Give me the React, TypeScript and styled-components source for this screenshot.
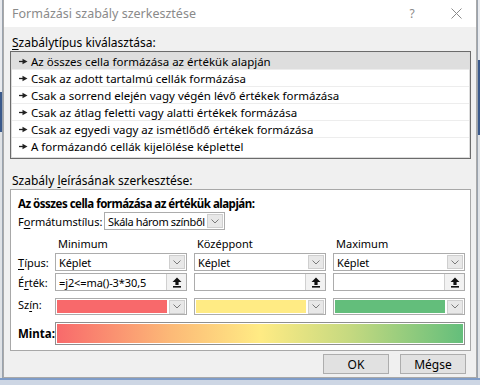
import React from 'react';
import styled, { createGlobalStyle } from 'styled-components';

const GlobalStyle = createGlobalStyle`
  html, body {
    margin: 0;
    padding: 0;
    width: 480px;
    height: 385px;
    overflow: hidden;
    background: #f4f5f7;
  }
  body {
    font-family: "Noto Sans", "Open Sans", Arial, sans-serif;
    font-size: 12px;
    color: #000;
  }
`;

const Page = styled.div`
  display: grid;
  grid-template-columns: 3px 474px 1fr;
  grid-template-rows: 378px 1fr;
  width: 480px;
  height: 385px;
`;

const SheetEdge = styled.div<{ $side: 'left' | 'right' }>`
  background:
    linear-gradient(
      to bottom,
      #e8eaee 0,
      #e8eaee ${(p) => (p.$side === 'left' ? '92px' : '60px')},
      #3b5a8c ${(p) => (p.$side === 'left' ? '92px' : '60px')},
      #3b5a8c ${(p) => (p.$side === 'left' ? '132px' : '135px')},
      #dfe2e6 ${(p) => (p.$side === 'left' ? '132px' : '135px')}
    );
  border-right: ${(p) => (p.$side === 'left' ? '1px solid #9aa3ae' : 'none')};
  border-left: ${(p) => (p.$side === 'right' ? '1px solid #9aa3ae' : 'none')};
`;

const SheetBottom = styled.div`
  grid-column: 1 / 4;
  background: #cdd6e4;
  border-top: 2px solid #7f9cc7;
`;

const Dialog = styled.div`
  display: flex;
  flex-direction: column;
  background: #f0f0f0;
  border: 1px solid #a9a9a9;
  border-top: none;
`;

const TitleBar = styled.div`
  height: 27px;
  display: flex;
  align-items: center;
  padding-left: 8px;
  background: #fff;
`;

const Title = styled.div`
  flex: 1;
  color: #8a8a8a;
  font-size: 12.5px;
`;

const TitleButton = styled.div<{ $w: number }>`
  width: ${(p) => p.$w}px;
  display: flex;
  justify-content: center;
  align-items: center;
  color: #8a8a8a;
  font-size: 12px;
`;

const Body = styled.div`
  display: flex;
  flex-direction: column;
  padding: 8px 5px 0 6px;
`;

const SectionLabel = styled.div<{ $mt?: number }>`
  height: 16px;
  line-height: 16px;
  margin-top: ${(p) => p.$mt ?? 0}px;
  margin-left: 2px;
  font-size: 12px;
`;

const Key = styled.span`
  text-decoration: underline;
  text-underline-offset: 2px;
`;

const ListBox = styled.div`
  height: 104px;
  border: 1px solid #6b6b6b;
  box-shadow: inset 0 0 0 1px #dcdcdc;
  background: #fff;
  padding: 1px;
  display: flex;
  flex-direction: column;
`;

const ListRow = styled.div<{ $selected?: boolean }>`
  height: 17px;
  box-sizing: border-box;
  display: flex;
  align-items: center;
  padding-left: 7px;
  gap: 3px;
  background: ${(p) => (p.$selected ? '#dedede' : '#fff')};
  border-bottom: 1px solid #ededed;
  font-size: 11.5px;
  white-space: nowrap;
  &:last-child {
    border-bottom: none;
  }
`;

const DescBox = styled.div`
  height: 162px;
  box-sizing: border-box;
  border: 1px solid #a8a8a8;
  background: #fff;
  padding: 6px 7px 0 7px;
  display: flex;
  flex-direction: column;
  font-size: 11px;
`;

const Heading = styled.div`
  font-weight: 700;
  font-size: 11.5px;
  letter-spacing: -0.5px;
  height: 15px;
  line-height: 15px;
`;

const StyleRow = styled.div`
  display: grid;
  grid-template-columns: 86px 121px;
  align-items: center;
  height: 20px;
`;

const Grid = styled.div`
  display: grid;
  grid-template-columns: 30px 132px 132px 132px;
  grid-template-rows: 14px 18px 18px 22px 28px;
  column-gap: 7px;
  row-gap: 2px;
  margin-top: 6px;
  align-items: center;
`;

const ColHead = styled.div`
  padding-left: 3px;
  line-height: 14px;
`;

const RowLabel = styled.div<{ $bold?: boolean }>`
  font-weight: ${(p) => (p.$bold ? 700 : 400)};
  font-size: ${(p) => (p.$bold ? 11.5 : 11)}px;
  white-space: nowrap;
`;

const Select = styled.div`
  height: 18px;
  box-sizing: border-box;
  border: 1px solid #acacac;
  background: #fff;
  display: flex;
  align-items: center;
  padding: 1px;
  padding-left: 3px;
`;

const ColorSelect = styled(Select)`
  align-self: end;
  height: 17px;
  padding-left: 1px;
`;

const SelectText = styled.div<{ $tight?: boolean }>`
  flex: 1;
  white-space: nowrap;
  overflow: hidden;
  letter-spacing: ${(p) => (p.$tight ? -0.35 : -0.1)}px;
`;

const ArrowBox = styled.div`
  width: 16px;
  height: 14px;
  flex-shrink: 0;
  box-sizing: border-box;
  border: 1px solid #cfcfcf;
  background: #e8e8e8;
  display: flex;
  align-items: center;
  justify-content: center;
`;

const Swatch = styled.div<{ $color: string }>`
  flex: 1;
  height: 13px;
  margin-right: 2px;
  background: ${(p) => p.$color};
`;

const UploadBtn = styled.div`
  width: 20px;
  height: 16px;
  box-sizing: border-box;
  border-left: 1px solid #d0d0d0;
  background: #f2f2f2;
  display: flex;
  align-items: center;
  justify-content: center;
`;

const Input = styled.div`
  height: 18px;
  box-sizing: border-box;
  border: 1px solid #acacac;
  background: #fff;
  display: flex;
  align-items: center;
  padding-left: 3px;
`;

const MintaLabel = styled(RowLabel)`
  align-self: end;
  line-height: 23px;
`;

const Gradient = styled.div`
  grid-column: 2 / 5;
  align-self: end;
  height: 23px;
  box-sizing: border-box;
  border: 1px solid #8f8f8f;
  box-shadow: inset 0 0 0 1px #fff;
  background: linear-gradient(to right, #f8696b 0%, #fcb977 28%, #ffeb84 50%, #c5d980 72%, #63be7b 100%);
`;

const Footer = styled.div`
  display: flex;
  justify-content: flex-end;
  gap: 11px;
  padding: 3px 5px 0 0;
`;

const Button = styled.div`
  width: 66px;
  height: 20px;
  box-sizing: border-box;
  border: 1px solid #adadad;
  background: #e1e1e1;
  display: flex;
  align-items: center;
  justify-content: center;
  font-size: 12px;
`;

const Chevron = () => (
  <svg width="8" height="5" viewBox="0 0 8 5">
    <path d="M0.5 0.5 L4 4 L7.5 0.5" fill="none" stroke="#7a7a7a" strokeWidth="1" />
  </svg>
);

const Pointer = () => (
  <svg width="9" height="7" viewBox="0 0 9 7">
    <path d="M0 3.5 H4" stroke="#222" strokeWidth="1.3" />
    <path d="M3.5 0.8 L8.5 3.5 L3.5 6.2 Z" fill="#222" />
  </svg>
);

const UploadIcon = () => (
  <svg width="10" height="11" viewBox="0 0 10 11">
    <path d="M5 0.5 L9.5 5 L6.6 5 L6.6 8 L3.4 8 L3.4 5 L0.5 5 Z" fill="#111" />
    <rect x="1" y="9" width="8" height="1.6" fill="#111" />
  </svg>
);

const ruleTypes = [
  'Az összes cella formázása az értékük alapján',
  'Csak az adott tartalmú cellák formázása',
  'Csak a sorrend elején vagy végén lévő értékek formázása',
  'Csak az átlag feletti vagy alatti értékek formázása',
  'Csak az egyedi vagy az ismétlődő értékek formázása',
  'A formázandó cellák kijelölése képlettel',
];

const columns = [
  { head: 'Minimum', value: '=j2<=ma()-3*30,5', color: '#f8696b' },
  { head: 'Középpont', value: '', color: '#ffeb84' },
  { head: 'Maximum', value: '', color: '#63be7b' },
];

export default function App() {
  return (
    <>
      <GlobalStyle />
      <Page>
        <SheetEdge $side="left" />
        <Dialog>
          <TitleBar>
            <Title>Formázási szabály szerkesztése</Title>
            <TitleButton $w={48}>?</TitleButton>
            <TitleButton $w={40}>
              <svg width="11" height="11" viewBox="0 0 11 11">
                <path d="M0.5 0.5 L10.5 10.5 M10.5 0.5 L0.5 10.5" stroke="#8a8a8a" strokeWidth="1" />
              </svg>
            </TitleButton>
          </TitleBar>
          <Body>
            <SectionLabel>
              <Key>S</Key>zabálytípus kiválasztása:
            </SectionLabel>
            <ListBox>
              {ruleTypes.map((t, i) => (
                <ListRow key={t} $selected={i === 0}>
                  <Pointer />
                  {t}
                </ListRow>
              ))}
            </ListBox>
            <SectionLabel $mt={14}>
              Szabály <Key>l</Key>eírásának szerkesztése:
            </SectionLabel>
            <DescBox>
              <Heading>Az összes cella formázása az értékük alapján:</Heading>
              <StyleRow>
                <RowLabel>
                  F<Key>o</Key>rmátumstílus:
                </RowLabel>
                <Select>
                  <SelectText $tight>Skála három színből</SelectText>
                  <ArrowBox>
                    <Chevron />
                  </ArrowBox>
                </Select>
              </StyleRow>
              <Grid>
                <div />
                {columns.map((c) => (
                  <ColHead key={c.head}>{c.head}</ColHead>
                ))}
                <RowLabel>
                  <Key>T</Key>ípus:
                </RowLabel>
                {columns.map((c) => (
                  <Select key={c.head}>
                    <SelectText>Képlet</SelectText>
                    <ArrowBox>
                      <Chevron />
                    </ArrowBox>
                  </Select>
                ))}
                <RowLabel>
                  É<Key>r</Key>ték:
                </RowLabel>
                {columns.map((c) => (
                  <Input key={c.head}>
                    <SelectText>{c.value}</SelectText>
                    <UploadBtn>
                      <UploadIcon />
                    </UploadBtn>
                  </Input>
                ))}
                <RowLabel>
                  Sz<Key>í</Key>n:
                </RowLabel>
                {columns.map((c) => (
                  <ColorSelect key={c.head}>
                    <Swatch $color={c.color} />
                    <ArrowBox>
                      <Chevron />
                    </ArrowBox>
                  </ColorSelect>
                ))}
                <MintaLabel $bold>Minta:</MintaLabel>
                <Gradient />
              </Grid>
            </DescBox>
            <Footer>
              <Button>OK</Button>
              <Button>Mégse</Button>
            </Footer>
          </Body>
        </Dialog>
        <SheetEdge $side="right" />
        <SheetBottom />
      </Page>
    </>
  );
}
